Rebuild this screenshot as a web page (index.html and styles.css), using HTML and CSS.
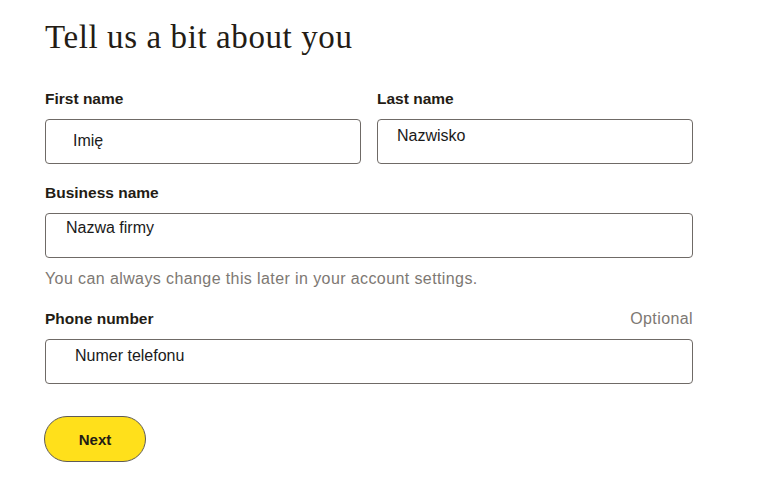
FILE: index.html
```html
<!DOCTYPE html>
<html>
<head>
  <title>Tell us a bit about you</title>
  <link rel="stylesheet" href="styles.css">
</head>
<body>
  <div class="container">
    <h1 class="title">Tell us a bit about you</h1>

    <form id="aboutForm" class="about-form">
      <div class="row">
        <div class="field">
          <label for="firstName">First name</label>
          <input type="text" id="firstName" name="firstName" class="input input-first" value="Imię">
        </div>
        <div class="field">
          <label for="lastName">Last name</label>
          <input type="text" id="lastName" name="lastName" class="input input-last" value="Nazwisko">
        </div>
      </div>

      <div class="field field-hint">
        <label for="businessName">Business name</label>
        <input type="text" id="businessName" name="businessName" class="input input-business" value="Nazwa firmy">
        <p class="hint">You can always change this later in your account settings.</p>
      </div>

      <div class="field">
        <div class="label-row">
          <label for="phone">Phone number</label>
          <span class="optional">Optional</span>
        </div>
        <input type="text" id="phone" name="phone" class="input input-phone" value="Numer telefonu">
      </div>

      <button type="submit" class="next-btn">Next</button>
    </form>
  </div>
</body>
</html>
```

FILE: styles.css
```css
/* Onboarding form */

body {
  margin: 0;
  padding: 0;
  background-color: #fff;
  color: #241c15;
  font-family: "Liberation Sans", Arial, sans-serif;
}

.container {
  width: 648px;
  padding: 17px 0 0 45px;
}

.title {
  margin: 0 0 32px;
  font-family: "Liberation Serif", "Times New Roman", serif;
  font-size: 33px;
  font-weight: normal;
  line-height: 40px;
  letter-spacing: 0.6px;
  color: #241c15;
}

.about-form {
  display: flex;
  flex-direction: column;
  gap: 19px;
}

.row {
  display: flex;
  gap: 16px;
}

.row .field {
  flex: 1;
}

.field {
  display: flex;
  flex-direction: column;
}

.field-hint {
  gap: 0;
}

label {
  display: block;
  font-size: 15.5px;
  font-weight: bold;
  line-height: 20px;
  margin-bottom: 10px;
}

.label-row {
  display: flex;
  justify-content: space-between;
}

.optional {
  font-size: 16px;
  line-height: 20px;
  letter-spacing: 0.4px;
  color: #7d7873;
}

.input {
  box-sizing: border-box;
  width: 100%;
  height: 45px;
  margin: 0;
  border: 1px solid #6f6a66;
  border-radius: 4px;
  background: #fff;
  font-family: "Liberation Sans", Arial, sans-serif;
  font-size: 16px;
  color: #1a1a1a;
  outline: none;
}

/* each field keeps its own text inset */
.input-first {
  padding: 4px 10px 6px 27px;
}

.input-last {
  padding: 2px 10px 14px 19px;
}

.input-business {
  padding: 0 10px 16px 20px;
}

.input-phone {
  padding: 0 10px 12px 29px;
}

.hint {
  margin: 11px 0 1px;
  font-size: 16px;
  line-height: 20px;
  letter-spacing: 0.4px;
  color: #7d7873;
}

.next-btn {
  align-self: flex-start;
  width: 102px;
  height: 46px;
  margin: 13px 0 0 -1px;
  border: 1px solid #5f5b57;
  border-radius: 23px;
  background-color: #ffe01b;
  color: #241c15;
  font-family: "Liberation Sans", Arial, sans-serif;
  font-size: 15px;
  font-weight: bold;
  cursor: pointer;
}
```
